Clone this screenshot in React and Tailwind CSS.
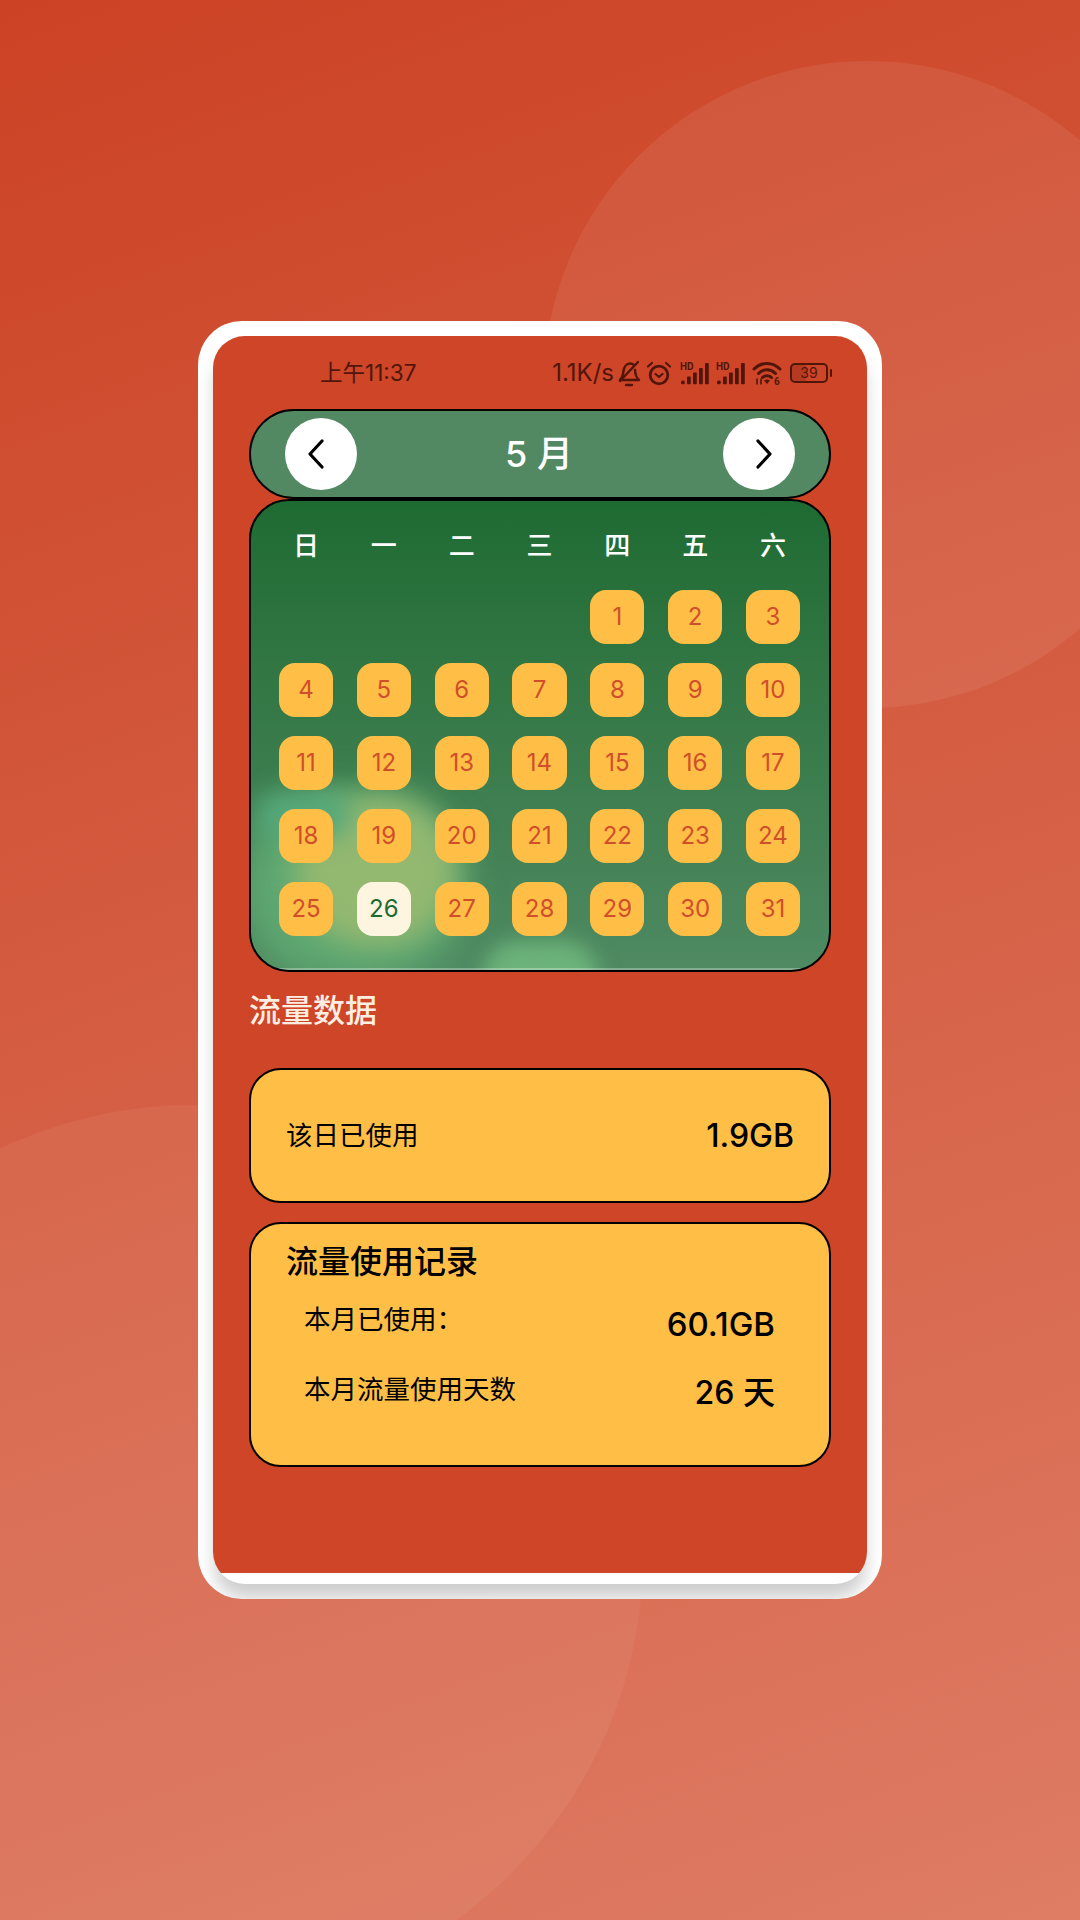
import React from 'react';

const WEEK = ['日', '一', '二', '三', '四', '五', '六'];
const DAYS = Array.from({ length: 31 }, (_, i) => i + 1);

const BellOff = () => (
  <svg width="24" height="27" viewBox="0 0 24 27" fill="none" stroke="#51160a" strokeWidth="2.400" strokeLinecap="round" strokeLinejoin="round">
    <path d="M3 20c2-2 3-4.500 3.500-9 .5-4 3-7.500 6.500-7.500 1.500 0 2.800.5 4 1.500" />
    <path d="M18 10c.3 4.500 1 7.500 4 10H3" />
    <path d="M3 21 21 2" />
    <path d="M9 25h6" />
  </svg>
);

const Alarm = () => (
  <svg width="26" height="27" viewBox="0 0 26 27" fill="none" stroke="#51160a" strokeLinecap="round" strokeLinejoin="round">
    <circle cx="13" cy="15" r="8.800" strokeWidth="2.800" />
    <path d="M9.500 14 13 17l3.500-3" strokeWidth="2.200" />
    <path d="M2 6.500 6 3M24 6.500 20 3" strokeWidth="2.200" />
  </svg>
);

const Signal = () => (
  <svg width="30" height="25" viewBox="0 0 30 25" fill="#51160a">
    <text x="0" y="9" fontSize="10" fontWeight="700" fontFamily="Roboto, sans-serif">HD</text>
    <rect x="1" y="19.500" width="3.800" height="3.800" rx="1.500" />
    <rect x="7" y="15.500" width="3.800" height="7.800" rx="1" />
    <rect x="13" y="11.500" width="3.800" height="11.800" rx="1" />
    <rect x="19" y="7" width="3.800" height="16.300" rx="1" />
    <rect x="25" y="2" width="3.800" height="21.300" rx="1" />
  </svg>
);

const Wifi = () => (
  <svg width="30" height="26" viewBox="0 0 30 26" fill="none" stroke="#51160a" strokeWidth="3" strokeLinecap="round">
    <path d="M2 9C9.500 1.500 20.500 1.500 28 9" />
    <path d="M6.500 13.500c5-5 12-5 17 0" />
    <path d="M10.500 17.500c2.500-2.500 6.500-2.500 9 0" />
    <path d="m15 24-3-3.500c2-1.200 4-1.200 6 0z" fill="#51160a" stroke="none" />
    <path d="M5 24v-5M9 19v5" strokeWidth="1.600" />
    <text x="22" y="25" fontSize="10" fontWeight="700" fontFamily="Roboto, sans-serif" fill="#51160a" stroke="none">6</text>
  </svg>
);

const Battery = () => (
  <div className="flex items-center gap-[2px]">
    <div className="relative flex h-[20px] w-[38px] items-center justify-center rounded-[5px] border-2 border-[#51160a]">
      <div className="absolute inset-y-0 left-0 w-[14px] rounded-l-[3px] bg-[#51160a]/20" />
      <span className="relative text-[14px] leading-none text-[#51160a]">39</span>
    </div>
    <div className="h-[8px] w-[2px] rounded-full bg-[#51160a]" />
  </div>
);

const NavButton = ({ d, className }) => (
  <button className={`flex h-[72px] w-[72px] items-center justify-center rounded-full bg-white ${className}`}>
    <svg width="18" height="30" viewBox="0 0 18 30" fill="none" stroke="#000" strokeWidth="3.200" strokeLinecap="round" strokeLinejoin="round">
      <path d={d} />
    </svg>
  </button>
);

const App = () => {
  return (
    <div
      className="relative h-[1920px] w-[1080px] overflow-hidden bg-linear-[160deg] from-[#cc4224] to-[#de7c64] pt-[321px]"
      style={{ fontFamily: 'Inter, "Noto Sans CJK SC", sans-serif' }}
    >
      <div className="absolute left-[544px] top-[61px] h-[647px] w-[647px] rounded-full bg-white/[0.07]" />
      <div className="absolute left-[-257px] top-[1105px] h-[900px] w-[900px] rounded-full bg-white/[0.05]" />

      <div className="relative mx-auto h-[1278px] w-[684px] overflow-hidden rounded-[44px] bg-white p-[15px]">
        <div className="h-[1248px] overflow-hidden rounded-[32px] bg-white shadow-[0_16px_18px_-2px_rgba(0,0,0,0.2)]">
          <div className="flex h-[1237px] flex-col bg-[#ce4527] px-[36px]">
            {/* status bar */}
            <div className="-mx-[36px] flex h-[73px] items-center justify-between pl-[107px] pr-[35px] pt-[1px] text-[#51160a]">
              <span className="text-[22.500px] leading-none">上午11:37</span>
              <div className="flex items-center">
                <span className="text-[24px] leading-none">1.1K/s</span>
                <div className="ml-[3px]"><BellOff /></div>
                <div className="ml-[5px]"><Alarm /></div>
                <div className="ml-[8px]"><Signal /></div>
                <div className="ml-[6px]"><Signal /></div>
                <div className="ml-[6px]"><Wifi /></div>
                <div className="ml-[8px]"><Battery /></div>
              </div>
            </div>

            {/* month switcher */}
            <div className="flex h-[90px] items-center justify-between rounded-full border-2 border-black bg-[#528963] px-[34px]">
              <NavButton d="M15 2 3 15l12 13" className="pr-[10px]" />
              <span className="-ml-[2px] text-[36px] font-medium leading-none text-white">5 月</span>
              <NavButton d="M3 2l12 13L3 28" className="pl-[10px]" />
            </div>

            {/* calendar */}
            <div className="relative h-[473px] overflow-hidden rounded-[40px] border-2 border-black bg-gradient-to-b from-[#1e6b32] to-[#4f8a62] pl-[28px] pr-[29px] pt-[25px]">
              <div className="absolute left-[-10px] top-[290px] h-[190px] w-[225px] rounded-full bg-[#5fa872] blur-[18px]" />
              <div className="absolute left-[45px] top-[295px] h-[150px] w-[160px] rounded-full bg-[#93b870] blur-[14px]" />
              <div className="absolute left-[5px] top-[292px] h-[45px] w-[95px] rounded-full bg-[#55a87a] blur-[12px]" />
              <div className="absolute left-[232px] top-[440px] h-[70px] w-[115px] rounded-full bg-[#6cb27a] blur-[10px]" />
              <div className="absolute inset-x-0 bottom-0 h-[2px] bg-white/30" />

              <div className="relative grid grid-cols-7 gap-x-[23.800px]">
                {WEEK.map((w) => (
                  <div key={w} className="flex h-[40px] items-center justify-center text-[26px] font-medium leading-none text-white">{w}</div>
                ))}
              </div>
              <div className="relative mt-[24px] grid grid-cols-7 gap-x-[23.800px] gap-y-[19px]">
                {DAYS.map((d) => (
                  <div
                    key={d}
                    className={`flex h-[54px] items-center justify-center rounded-[16px] text-[24px] font-normal leading-none ${d === 1 ? 'col-start-5' : ''} ${d === 26 ? 'bg-[#fdf5e0] text-[#1e6b32]' : 'bg-[#ffbf47] text-[#d04f2a]'}`}
                  >
                    {d}
                  </div>
                ))}
              </div>
            </div>

            <h2 className="mt-[19px] text-[32px] font-medium leading-[40px] text-[#fdeee2]">流量数据</h2>

            {/* today */}
            <div className="mt-[37px] flex h-[135px] items-center justify-between rounded-[32px] border-2 border-black bg-[#ffbf47] px-[35px] text-black">
              <span className="text-[26.500px] leading-none">该日已使用</span>
              <span className="text-[32px] font-medium leading-none">1.9GB</span>
            </div>

            {/* usage record */}
            <div className="mt-[19px] h-[245px] rounded-[32px] border-2 border-black bg-[#ffbf47] px-[35px] pt-[18px] text-black">
              <div className="text-[32px] font-medium leading-[40px]">流量使用记录</div>
              <div className="mt-[16px] flex items-start justify-between pl-[18px] pr-[19px]">
                <span className="mt-[3px] text-[26.500px] leading-[36px]">本月已使用：</span>
                <span className="mt-[8px] text-[33px] font-medium leading-[36px]">60.1GB</span>
              </div>
              <div className="mt-[26px] flex items-start justify-between pl-[18px] pr-[19px]">
                <span className="mt-[3px] text-[26.500px] leading-[36px]">本月流量使用天数</span>
                <span className="mt-[7px] text-[32px] font-medium leading-[36px]">26 天</span>
              </div>
            </div>
          </div>
        </div>
      </div>
    </div>
  );
};

export default App;
